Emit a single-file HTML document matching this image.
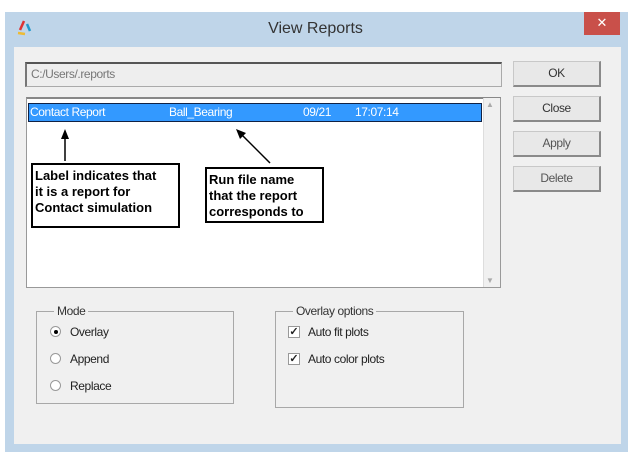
<!DOCTYPE html>
<html><head><style>
*{margin:0;padding:0;box-sizing:border-box}
body{width:631px;height:453px;background:#fff;position:relative;overflow:hidden;font-family:"Liberation Sans",sans-serif;font-size:12px;color:#222}
.a{position:absolute}
.t{letter-spacing:-0.4px}
.btn{position:absolute;left:513px;width:88px;height:26px;background:#e8e8e8;border:1px solid #c8c8c8;border-right:2px solid #8a8a8a;border-bottom:2px solid #8a8a8a;text-align:center;line-height:22px;color:#333;letter-spacing:-0.4px}
.grp{position:absolute;border:1px solid #a8a8a8}
.lg{position:absolute;top:-8px;background:#f0f0f0;padding:0 3px;letter-spacing:-0.4px;color:#333}
.note{position:absolute;background:#fff;border:2px solid #000;font-weight:bold;font-size:13px;line-height:16px;padding:3px 2px;color:#000;white-space:nowrap}
.rad{position:absolute;width:11px;height:11px;border-radius:50%;border:1px solid #999;background:#fff}
.chk{position:absolute;width:12px;height:12px;border:1px solid #999;background:#fff;font-size:11px;line-height:10px;text-align:center;font-weight:bold}
</style></head><body>
<div class="a" style="left:5px;top:12px;width:623px;height:440px;background:#bfd5e9"></div>
<div class="a" style="left:584px;top:12px;width:36px;height:23px;background:#c9504a;color:#fff;text-align:center;line-height:22px;font-size:13px">✕</div>
<svg class="a" style="left:16px;top:18px" width="20" height="20"><path d="M8 3L4 12" stroke="#d33" stroke-width="2.5"/><path d="M11 6L14 13" stroke="#29c" stroke-width="2.5"/><path d="M2 15L9 16" stroke="#eb3" stroke-width="2.5"/></svg>
<div class="a" style="left:0;width:631px;top:20px;text-align:center;font-size:16px;color:#333">View Reports</div>
<div class="a" style="left:14px;top:47px;width:607px;height:397px;background:#f0f0f0"></div>
<div class="a t" style="left:25px;top:62px;width:477px;height:25px;border:1px solid #aaa;border-top:2px solid #555;border-left:2px solid #777;background:#eee;color:#777;padding:3px 4px">C:/Users/.reports</div>
<div class="btn" style="top:61px">OK</div>
<div class="btn" style="top:96px">Close</div>
<div class="btn" style="top:131px;color:#555">Apply</div>
<div class="btn" style="top:166px;color:#555">Delete</div>
<div class="a" style="left:26px;top:97px;width:475px;height:191px;background:#fff;border:1px solid #999;border-top:2px solid #888"></div>
<div class="a" style="left:483px;top:98px;width:17px;height:189px;background:#f0f0f0;border-left:1px solid #ddd"></div>
<div class="a" style="left:486px;top:100px;font-size:8px;color:#aaa">▲</div>
<div class="a" style="left:486px;top:276px;font-size:8px;color:#aaa">▼</div>
<div class="a t" style="left:28px;top:103px;width:454px;height:19px;background:#3399ff;border:1px solid #124;color:#fff;line-height:17px">
<span class="a" style="left:1px">Contact Report</span><span class="a" style="left:140px">Ball_Bearing</span><span class="a" style="left:274px">09/21</span><span class="a" style="left:326px">17:07:14</span></div>
<svg class="a" style="left:0;top:0" width="631" height="300"><path d="M65 161V136" stroke="#000" stroke-width="1.5"/><path d="M61 139L65 129L69 139Z"/><path d="M270 163L240 133" stroke="#000" stroke-width="1.5"/><path d="M236 129L246 133L240 139Z"/></svg>
<div class="note" style="left:31px;top:163px;width:149px;height:65px">Label indicates that<br>it is a report for<br>Contact simulation</div>
<div class="note" style="left:205px;top:167px;width:119px;height:56px">Run file name<br>that the report<br>corresponds to</div>
<div class="grp" style="left:36px;top:311px;width:198px;height:93px"><span class="lg" style="left:17px">Mode</span></div>
<div class="rad" style="left:50px;top:326px"><div class="a" style="left:3px;top:3px;width:4px;height:4px;border-radius:50%;background:#000"></div></div>
<div class="a t" style="left:70px;top:325px">Overlay</div>
<div class="rad" style="left:50px;top:353px"></div><div class="a t" style="left:70px;top:352px">Append</div>
<div class="rad" style="left:50px;top:380px"></div><div class="a t" style="left:70px;top:379px">Replace</div>
<div class="grp" style="left:275px;top:311px;width:189px;height:97px"><span class="lg" style="left:17px">Overlay options</span></div>
<div class="chk" style="left:288px;top:326px">✓</div><div class="a t" style="left:308px;top:325px">Auto fit plots</div>
<div class="chk" style="left:288px;top:353px">✓</div><div class="a t" style="left:308px;top:352px">Auto color plots</div>
</body></html>
